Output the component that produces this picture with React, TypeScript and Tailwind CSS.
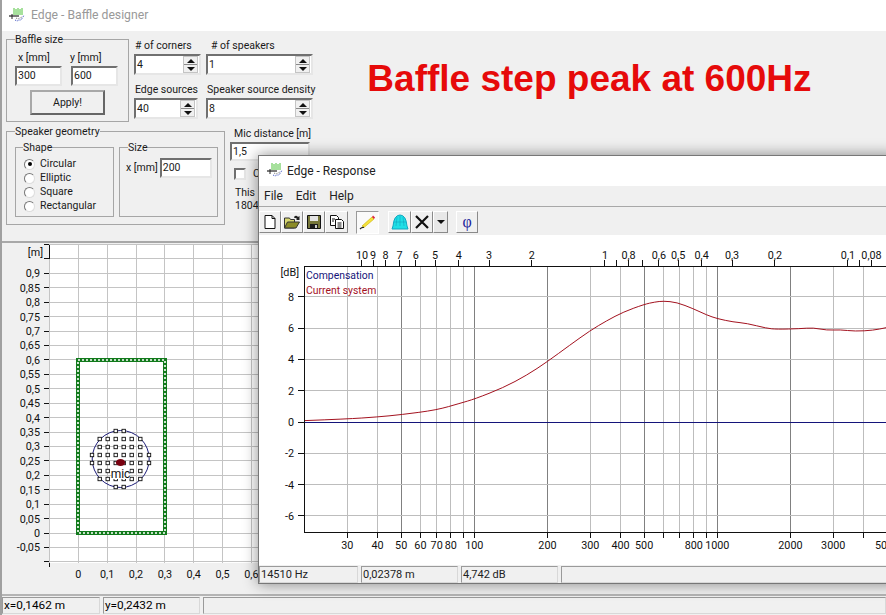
import { ReactNode } from "react";

const sunken =
  "border-2 border-t-[#707070] border-l-[#707070] border-r-[#e6e6e6] border-b-[#e6e6e6] bg-white";
const raised =
  "border border-t-white border-l-white border-r-[#8a8a8a] border-b-[#8a8a8a]";

// snap to the pixel grid so 1px chart lines stay solid
const px = (v: number) => Math.floor(v) + 0.5;

function AppIcon() {
  return (
    <svg width="18" height="18" viewBox="0 0 18 18" className="shrink-0">
      <path d="M6 1v7M8 2v6M10 1v7M12 2v6M14 1v7" stroke="#4fc23a" strokeWidth="1" />
      <path d="M1 9h10" stroke="#222" strokeWidth="1.2" />
      <path d="M4 7v5" stroke="#222" strokeWidth="1" />
      <path d="M7 13l2 1 2-1 2 0 2-3 1-2" stroke="#3a4fc0" strokeWidth="1" strokeDasharray="1 1" fill="none" />
      <path d="M8 11l2 1 2-1 2-1" stroke="#777" strokeWidth="1" strokeDasharray="1 1" fill="none" />
    </svg>
  );
}

function SpinBox({ value, width, spin = 15 }: { value: string; width: string; spin?: number }) {
  return (
    <div className={`${sunken} ${width} h-[21px] flex items-center justify-between pl-[1px] pr-[1px]`}>
      <span>{value}</span>
      <div className="flex flex-col h-[17px] bg-[#f0f0f0] border border-[#c4c4c4]" style={{ width: spin }}>
        <div className="flex-1 flex items-center justify-center border-b border-[#8a8a8a]">
          <svg width="8" height="4" viewBox="0 0 8 4"><path d="M4 0l4 4H0z" fill="#111" /></svg>
        </div>
        <div className="flex-1 flex items-center justify-center">
          <svg width="8" height="4" viewBox="0 0 8 4"><path d="M0 0h8L4 4z" fill="#111" /></svg>
        </div>
      </div>
    </div>
  );
}

function Group({ label, className, legendClass, children }: { label: string; className: string; legendClass: string; children: ReactNode }) {
  return (
    <fieldset className={`border border-[#a6a6a6] p-0 m-0 min-w-0 ${className}`}>
      <legend className={`leading-[13px] p-0 ${legendClass}`}>{label}</legend>
      {children}
    </fieldset>
  );
}

function Radio({ label, checked }: { label: string; checked?: boolean }) {
  return (
    <div className="h-[14px] flex items-center gap-[5px]">
      <div className="w-[11px] h-[11px] rounded-full bg-white border border-t-[#777] border-l-[#777] border-r-[#ddd] border-b-[#ddd] flex items-center justify-center">
        {checked && <div className="w-[4px] h-[4px] rounded-full bg-black" />}
      </div>
      <span>{label}</span>
    </div>
  );
}

function ControlPanel() {
  return (
    <div className="h-[212px] pt-[2px] pl-[4px] border-b-2 border-[#a8a8a8] text-[#1a1a1a]">
      <div className="flex items-start h-[89px]">
        <Group label="Baffle size" className="w-[123px] h-[89px]" legendClass="ml-[8px]">
          <div className="flex gap-[9px] pl-[8px] pt-[4px]">
            <div className="w-[47px]">
              <div className="h-[14px] leading-[16px] pl-[3px]">x [mm]</div>
              <div className={`${sunken} h-[20px] mt-[2px] pl-[1px] leading-[16px]`}>300</div>
            </div>
            <div className="w-[47px]">
              <div className="h-[14px] leading-[16px] -ml-[1px]">y [mm]</div>
              <div className={`${sunken} h-[20px] mt-[2px] pl-[1px] leading-[16px]`}>600</div>
            </div>
          </div>
          <div className="ml-[23px] mt-[4px] w-[75px] h-[25px] flex items-center justify-center bg-[#f0f0f0] border-2 border-t-[#a8a8a8] border-l-[#a8a8a8] border-r-[#666] border-b-[#666]">
            Apply!
          </div>
        </Group>
        <div className="ml-[5px] pt-[5px] grid grid-cols-[72px_auto]">
          <div className="h-[16px] leading-[16px] pl-[1px]"># of corners</div>
          <div className="h-[16px] leading-[16px] pl-[5px]"># of speakers</div>
          <SpinBox value="4" width="w-[67px]" />
          <SpinBox value="1" width="w-[107px]" />
          <div className="h-[14px] leading-[16px] mt-[7px] pl-[1px]">Edge sources</div>
          <div className="h-[14px] leading-[16px] mt-[7px] pl-[1px] whitespace-nowrap">Speaker source density</div>
          <div className="mt-[2px]"><SpinBox value="40" width="w-[64px]" /></div>
          <div className="mt-[2px]"><SpinBox value="8" width="w-[107px]" /></div>
        </div>
        <h1 className="ml-[52px] mt-[26px] font-['Liberation_Sans',sans-serif] font-bold text-[37px] leading-[40px] text-[#e60a0a] whitespace-nowrap">
          Baffle step peak at 600Hz
        </h1>
      </div>
      <div className="flex items-start mt-[3px]">
        <Group label="Speaker geometry" className="w-[219px] h-[100px]" legendClass="ml-[8px]">
          <div className="flex gap-[5px] pl-[8px] pt-[3px]">
            <Group label="Shape" className="w-[99px] h-[76px]" legendClass="ml-[7px]">
              <div className="pl-[8px] pt-[3px]">
                <Radio label="Circular" checked />
                <Radio label="Elliptic" />
                <Radio label="Square" />
                <Radio label="Rectangular" />
              </div>
            </Group>
            <Group label="Size" className="w-[99px] h-[76px]" legendClass="ml-[8px]">
              <div className="flex items-center gap-[2px] pl-[6px] pt-[4px] whitespace-nowrap">
                <span>x [mm]</span>
                <div className={`${sunken} w-[52px] h-[20px] pl-[1px] leading-[16px]`}>200</div>
              </div>
            </Group>
          </div>
        </Group>
        <div className="ml-[5px] pt-[1px]">
          <div className="h-[14px] leading-[16px] pl-[4px] whitespace-nowrap">Mic distance [m]</div>
          <div className={`${sunken} w-[80px] h-[19px] mt-[2px] pl-[1px] leading-[15px]`}>1,5</div>
          <div className="flex items-center gap-[7px] mt-[7px] ml-[4px] h-[12px]">
            <div className={`${sunken} w-[12px] h-[12px]`} />
            <span>C</span>
          </div>
          <div className="mt-[6px] ml-[5px] leading-[13px]">
            This
            <br />
            1804
          </div>
        </div>
      </div>
    </div>
  );
}

const X0 = 78.3;
const Y0 = 533;
const UNIT = 288.5;

function fmt(v: number) {
  return String(Number(v.toFixed(2))).replace(".", ",");
}

function BaffleDots() {
  const xs = [99.7, 107.7, 115.7, 123.7, 131.7, 140.3];
  const ys = [439, 447, 455, 463, 471, 479];
  const dots: [number, number][] = [
    [115.7, 431], [123.7, 431], [115.7, 487], [123.7, 487],
    [92, 455], [92, 463], [149, 455], [149, 463],
  ];
  ys.forEach((y) => xs.forEach((x) => dots.push([x, y])));
  return (
    <>
      {dots.map(([x, y]) => (
        <rect key={`${x}-${y}`} x={x - 1.7} y={y - 1.7} width="3.4" height="3.4" fill="white" stroke="#111" strokeWidth="0.9" />
      ))}
    </>
  );
}

function BafflePlot() {
  const yVals: number[] = [];
  for (let i = -2; i <= 20; i++) yVals.push(i * 0.05);
  const xVals = [-0.1, 0, 0.1, 0.2, 0.3, 0.4, 0.5, 0.6, 0.7, 0.8, 0.9, 1, 1.1, 1.2, 1.3];
  return (
    <svg width="884" height="351" viewBox="2 243 884 351" className="block" fontSize="10.8" fill="#111">
      <rect x="49" y="245" width="840" height="318" fill="white" />
      {yVals.map((v) => (
        <g key={v}>
          <line x1="49" x2="886" y1={px(Y0 - v * UNIT)} y2={px(Y0 - v * UNIT)} stroke="#c4c4c4" />
          <line x1="44" x2="49" y1={px(Y0 - v * UNIT)} y2={px(Y0 - v * UNIT)} stroke="#111" />
          {v > -0.06 && v < 0.91 && (
            <text x="40" y={Y0 - v * UNIT + 4} textAnchor="end">{fmt(v)}</text>
          )}
        </g>
      ))}
      {xVals.map((v) => (
        <g key={v}>
          <line x1={px(X0 + v * UNIT)} x2={px(X0 + v * UNIT)} y1="245" y2="563" stroke="#c4c4c4" />
          {v >= 0 && v <= 0.61 && (
            <text x={X0 + v * UNIT} y="578" textAnchor="middle">{fmt(v)}</text>
          )}
        </g>
      ))}
      <path d="M49.5 245v14M49.5 563v4" stroke="#111" />
      <text x="43" y="256" textAnchor="end">[m]</text>

      <rect x="78" y="360" width="87" height="173" fill="none" stroke="#127a1c" strokeWidth="4" />
      <rect x="78" y="360" width="87" height="173" fill="none" stroke="white" strokeWidth="1.6" strokeDasharray="2 2" />

      <circle cx="120.7" cy="459" r="28.5" fill="none" stroke="#1c1c78" />
      <BaffleDots />
      <rect x="111.5" y="468" width="18" height="11" fill="white" />
      <ellipse cx="120.5" cy="462.5" rx="4.6" ry="3.6" fill="#78000f" />
      <text x="120.5" y="478" textAnchor="middle" fontSize="12">mic</text>
    </svg>
  );
}

const statusCell =
  "h-[17px] leading-[15px] pl-[1px] border border-t-[#9a9a9a] border-l-[#9a9a9a] border-r-[#d8d8d8] border-b-[#d8d8d8]";

function MainStatus() {
  return (
    <div className="h-[20px] border-t-2 border-[#b4b4b4] flex gap-[3px] pt-[1px] text-[11.8px]">
      <div className={`w-[98px] ${statusCell}`}>x=0,1462 m</div>
      <div className={`w-[97px] ${statusCell}`}>y=0,2432 m</div>
      <div className={`flex-1 ${statusCell}`} />
    </div>
  );
}

const fx = (f: number) => 474.3 + 243 * Math.log10(f / 100);
const lx = (m: number) => 474.3 + 243 * Math.log10(345 / (m * 100));
const dby = (d: number) => 422 - d * 15.64;

const lightF = [30, 40, 60, 70, 80, 90, 300, 400, 600, 700, 800, 900, 3000, 4000, 6000];
const darkF = [50, 100, 200, 500, 1000, 2000, 5000];
const bottomLabels: [number, string][] = [
  [30, "30"], [40, "40"], [50, "50"], [60, "60"], [70, "70"], [80, "80"], [90, ""], [100, "100"],
  [200, "200"], [300, "300"], [400, "400"], [500, "500"], [600, ""], [700, ""], [800, "800"], [900, ""],
  [1000, "1000"], [2000, "2000"], [3000, "3000"], [4000, ""], [5000, "5000"],
];
const topLabels: [number, string][] = [
  [10, "10"], [9, "9"], [8, "8"], [7, "7"], [6, "6"], [5, "5"], [4, "4"], [3, "3"], [2, "2"], [1, "1"],
  [0.9, ""], [0.8, "0,8"], [0.7, ""], [0.6, "0,6"], [0.5, "0,5"], [0.4, "0,4"], [0.3, "0,3"], [0.2, "0,2"],
  [0.1, "0,1"], [0.09, ""], [0.08, "0,08"],
];
const curve: [number, number][] = [
  [305, 420.6], [346.7, 419], [377, 417], [401, 414.7], [436.7, 410], [460, 403.3], [474.7, 399],
  [503.3, 387.7], [526.7, 375.3], [547.3, 361.7], [570, 345], [590, 330.7], [606.7, 320.7], [623.3, 312],
  [644.3, 304.3], [655, 302], [663.3, 301], [676.7, 302.3], [693.3, 308.7], [706.7, 315], [717.3, 318.7],
  [733.3, 322], [746.7, 323.3], [766.7, 328.3], [776.7, 329.3], [800, 328.7], [813.3, 327.7],
  [826.7, 330.3], [840, 329.7], [855, 331.3], [873.3, 330.3], [886, 327.7],
];

function smoothPath(pts: [number, number][]) {
  let d = `M${pts[0][0]} ${pts[0][1]}`;
  for (let i = 1; i < pts.length - 1; i++) {
    const mx = (pts[i][0] + pts[i + 1][0]) / 2;
    const my = (pts[i][1] + pts[i + 1][1]) / 2;
    d += `Q${pts[i][0]} ${pts[i][1]} ${mx} ${my}`;
  }
  const last = pts[pts.length - 1];
  return `${d}L${last[0]} ${last[1]}`;
}

function ResponsePlot() {
  return (
    <svg width="639" height="330" viewBox="259 235 639 330" className="block bg-white" fontSize="10.8" fill="#111">
      {lightF.map((f) => (
        <line key={f} x1={px(fx(f))} x2={px(fx(f))} y1="266" y2="532" stroke="#bdbdbd" />
      ))}
      {darkF.map((f) => (
        <line key={f} x1={px(fx(f))} x2={px(fx(f))} y1="266" y2="532" stroke="#808080" />
      ))}
      {[8, 6, 4, 2, -2, -4, -6].map((d) => (
        <line key={d} x1="304" x2="898" y1={px(dby(d))} y2={px(dby(d))} stroke="#bdbdbd" />
      ))}
      {[8, 6, 4, 2, 0, -2, -4, -6].map((d) => (
        <g key={d}>
          <line x1="298" x2="304" y1={px(dby(d))} y2={px(dby(d))} stroke="#111" />
          <text x="294" y={dby(d) + 4} textAnchor="end">{d}</text>
        </g>
      ))}
      <line x1="304" x2="898" y1={px(dby(0))} y2={px(dby(0))} stroke="#14147a" />
      <path d={smoothPath(curve)} fill="none" stroke="#a3121f" strokeWidth="1" />

      <path d="M304.5 266v266.5M304 266.5h594M304 532.5h594" stroke="#111" fill="none" />
      {bottomLabels.map(([f, t]) => (
        <g key={f}>
          <line x1={px(fx(f))} x2={px(fx(f))} y1="532" y2="538" stroke="#111" />
          {t && <text x={fx(f)} y="549" textAnchor="middle">{t}</text>}
        </g>
      ))}
      {topLabels.map(([m, t]) => (
        <g key={m}>
          <line x1={px(lx(m))} x2={px(lx(m))} y1="260" y2="266" stroke="#111" />
          {t && <text x={lx(m)} y="259" textAnchor="middle">{t}</text>}
        </g>
      ))}
      <text x="299" y="276" textAnchor="end">[dB]</text>
      <text x="306" y="279" fill="#14147a" fontSize="10.4">Compensation</text>
      <text x="306" y="294" fill="#a3121f" fontSize="10.4">Current system</text>
    </svg>
  );
}

function ToolButton({ children, width = "w-[22px]" }: { children: ReactNode; width?: string }) {
  return <div className={`${raised} ${width} h-[22px] flex items-center justify-center`}>{children}</div>;
}

function Toolbar() {
  return (
    <div className="h-[28px] flex items-center pt-[2px]">
      <ToolButton>
        <svg width="16" height="16" viewBox="0 0 16 16">
          <path d="M3 1.5h7l3 3v10H3z" fill="white" stroke="#111" />
          <path d="M10 1.5v3h3" fill="none" stroke="#111" />
        </svg>
      </ToolButton>
      <ToolButton>
        <svg width="18" height="16" viewBox="0 0 18 16">
          <path d="M1.5 14V4h5l1 1.5h4V14z" fill="#d8d870" stroke="#333" />
          <path d="M1.5 14l3-6h12l-3.5 6z" fill="#8c8c28" stroke="#333" />
          <path d="M11 3q2-2.500 4 0l1.500-1v4h-3.500l1-1q-1-1.500-2.500-1" fill="#222" />
        </svg>
      </ToolButton>
      <ToolButton>
        <svg width="16" height="16" viewBox="0 0 16 16">
          <path d="M1.500 1.500h13v13h-13z" fill="#77773a" stroke="#111" />
          <path d="M4 2h8v5H4z" fill="#e4e4e4" />
          <path d="M4 10h8v4.500H4z" fill="#1c1c1c" />
          <path d="M9 11h2v3H9z" fill="#cfcfcf" />
        </svg>
      </ToolButton>
      <ToolButton width="w-[23px]">
        <svg width="16" height="16" viewBox="0 0 16 16">
          <path d="M1.500 1.500h6l2 2v8h-8z" fill="white" stroke="#111" />
          <path d="M6.500 5.500h6l2 2v7h-8z" fill="white" stroke="#111" />
          <path d="M3 5h3M3 7h2M8.500 9h4M8.500 11h4M8.500 13h4" stroke="#111" />
        </svg>
      </ToolButton>
      <div className="ml-[8px] w-[23px] h-[23px] bg-[#fafafa] border border-t-[#9a9a9a] border-l-[#9a9a9a] border-r-white border-b-white flex items-center justify-center">
        <svg width="18" height="18" viewBox="0 0 18 18">
          <path d="M3 13L13 4l2 2L5 14.500z" fill="#f5e23c" stroke="#c9b000" strokeWidth="0.6" />
          <path d="M13 4l1-1.500 2 2L15 6z" fill="#e02040" />
          <path d="M1 16q2-2 4-1.500" fill="none" stroke="#222" strokeWidth="1.200" />
        </svg>
      </div>
      <div className="ml-[9px]">
        <ToolButton width="w-[23px]">
          <svg width="20" height="18" viewBox="0 0 20 18">
            <path d="M2 16l1-3Q4 2 10 2t7 11l1 3z" fill="#1fdfe6" stroke="#12a6c0" />
            <path d="M7 4l-1 9M10 3v10M13 4l1 9M4 9h12" stroke="#12a6c0" strokeWidth="0.6" />
          </svg>
        </ToolButton>
      </div>
      <ToolButton>
        <svg width="16" height="16" viewBox="0 0 16 16">
          <path d="M2 2l12 12M14 2L2 14" stroke="#111" strokeWidth="2.200" />
        </svg>
      </ToolButton>
      <div className="w-[15px] h-[22px] bg-[#e8e8e8] border border-t-white border-l-white border-r-[#8a8a8a] border-b-[#8a8a8a] flex items-center justify-center">
        <svg width="8" height="4" viewBox="0 0 8 4"><path d="M0 0h8L4 4z" fill="#111" /></svg>
      </div>
      <div className="ml-[8px]">
        <ToolButton>
          <span className="font-['Liberation_Serif',serif] text-[16px] leading-none text-[#1a1a9a]">φ</span>
        </ToolButton>
      </div>
    </div>
  );
}

function ResponseWindow() {
  return (
    <div className="absolute left-[256px] top-[155px] w-[640px] h-[429px] flex flex-col bg-[#f0f0f0] border-t border-l border-b border-[#777] shadow-[0_0_14px_rgba(0,0,0,0.45)]">
      <div className="h-[30px] bg-white flex items-center gap-[3px] pl-[7px] text-[12px] text-[#222]">
        <AppIcon />
        <span>Edge - Response</span>
      </div>
      <div className="h-[21px] flex items-center gap-[13px] pl-[5px] border-b border-[#a8a8a8] text-[12px] text-[#222]">
        <span>File</span>
        <span>Edit</span>
        <span>Help</span>
      </div>
      <Toolbar />
      <ResponsePlot />
      <div className="flex-1 flex gap-[3px] pt-[1px] text-[#222] text-[11px]">
        <div className={`w-[99px] ${statusCell}`}>14510 Hz</div>
        <div className={`w-[97px] ${statusCell}`}>0,02378 m</div>
        <div className={`w-[97px] ${statusCell}`}>4,742 dB</div>
        <div className={`flex-1 ${statusCell}`} />
      </div>
    </div>
  );
}

export default function App() {
  return (
    <div className="relative w-[886px] h-[615px] overflow-hidden bg-[#f0f0f0] border-l-2 border-[#a0a0a0] font-['Roboto',sans-serif] text-[10.5px]">
      <div className="h-[31px] bg-white flex items-center gap-[5px] pl-[6px] text-[12.2px] text-[#999]">
        <AppIcon />
        <span>Edge - Baffle designer</span>
      </div>
      <ControlPanel />
      <BafflePlot />
      <MainStatus />
      <ResponseWindow />
    </div>
  );
}
